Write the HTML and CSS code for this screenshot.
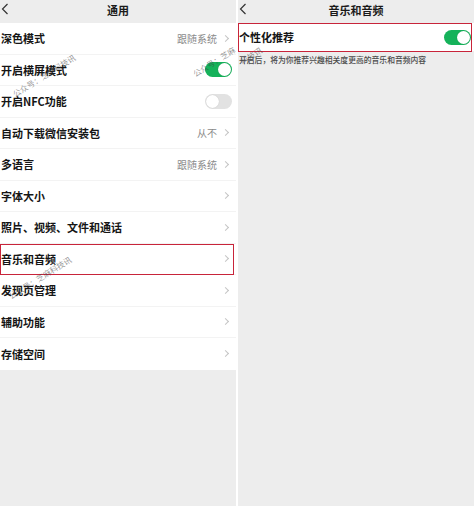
FILE: index.html
```html
<!DOCTYPE html>
<html lang="zh-CN">
  <head>
    <meta charset="UTF-8" />
    <title>通用 - 音乐和音频</title>
    <link rel="stylesheet" href="styles.css">
  </head>
  <body>
    <div class="screens">
      <div class="screen left">
        <div class="nav">
          <svg class="back" width="8" height="12" viewBox="0 0 8 12"><path d="M6.5 1 L1.5 6 L6.5 11" fill="none" stroke="#333" stroke-width="1.2"/></svg>
          <span class="nav-title">通用</span>
        </div>
        <ul class="list">
          <li class="row"><span class="label">深色模式</span><span class="value">跟随系统</span><span class="arrow"></span></li>
          <li class="row"><span class="label">开启横屏模式</span><span class="switch on"></span></li>
          <li class="row"><span class="label">开启NFC功能</span><span class="switch"></span></li>
          <li class="row"><span class="label">自动下载微信安装包</span><span class="value">从不</span><span class="arrow"></span></li>
          <li class="row"><span class="label">多语言</span><span class="value">跟随系统</span><span class="arrow"></span></li>
          <li class="row"><span class="label">字体大小</span><span class="arrow"></span></li>
          <li class="row"><span class="label">照片、视频、文件和通话</span><span class="arrow"></span></li>
          <li class="row marked"><span class="label">音乐和音频</span><span class="arrow"></span></li>
          <li class="row"><span class="label">发现页管理</span><span class="arrow"></span></li>
          <li class="row"><span class="label">辅助功能</span><span class="arrow"></span></li>
          <li class="row"><span class="label">存储空间</span><span class="arrow"></span></li>
        </ul>
        <span class="mark mark-1">公众号：芝麻科技讯</span>
        <span class="mark mark-2">公众号：芝麻</span>
        <span class="mark mark-3">公众号：芝麻科技讯</span>
      </div>
      <div class="screen right">
        <div class="nav">
          <svg class="back" width="8" height="12" viewBox="0 0 8 12"><path d="M6.5 1 L1.5 6 L6.5 11" fill="none" stroke="#333" stroke-width="1.2"/></svg>
          <span class="nav-title">音乐和音频</span>
        </div>
        <ul class="list">
          <li class="row marked"><span class="label">个性化推荐</span><span class="switch on"></span></li>
        </ul>
        <p class="tip">开启后，将为你推荐兴趣相关度更高的音乐和音频内容</p>
        <span class="mark mark-4">科技讯</span>
      </div>
    </div>
  </body>
</html>
```

FILE: styles.css
```css
* {
  box-sizing: border-box;
}
body {
  margin: 0;
  background: #fff;
  font-family: "Noto Sans CJK SC", "Noto Sans", sans-serif;
  color: #111;
}
ul {
  list-style: none;
  margin: 0;
  padding: 0;
}

.screens {
  display: grid;
  grid-template-columns: 236px 236px;
  gap: 2px;
  height: 506px;
}
.screen {
  position: relative;
  background: #ededed;
  overflow: hidden;
}

.nav {
  position: relative;
  height: 23px;
  display: flex;
  align-items: flex-start;
  justify-content: center;
  padding-top: 2px;
}
.nav .back {
  position: absolute;
  left: 1px;
  top: 3px;
}
.nav-title {
  font-size: 11px;
  line-height: 16px;
  font-weight: 700;
  color: #1a1a1a;
}

.list {
  background: #fff;
}
.row {
  position: relative;
  height: 31.5px;
  display: flex;
  align-items: center;
  padding: 0 6px 0 1px;
  border-bottom: 1px solid #f3f3f3;
}
.row:last-child {
  border-bottom: none;
}
.label {
  flex: 1;
  font-size: 11px;
  font-weight: 700;
  color: #151515;
}
.value {
  font-size: 10px;
  color: #8a8a8a;
  margin-right: 6px;
}
.arrow {
  width: 5px;
  height: 5px;
  border-top: 1px solid #c4c4c4;
  border-right: 1px solid #c4c4c4;
  transform: rotate(45deg);
  margin-right: 2px;
}

.switch {
  position: relative;
  width: 27px;
  height: 15px;
  border-radius: 8px;
  background: #e2e2e2;
  margin-right: -2px;
}
.switch::after {
  content: "";
  position: absolute;
  left: 1px;
  top: 1px;
  width: 13px;
  height: 13px;
  border-radius: 50%;
  background: #fff;
  box-shadow: 0 0 1px rgba(0, 0, 0, 0.2);
}
.switch.on {
  background: #15b25a;
}
.switch.on::after {
  left: 13px;
}

.marked::before {
  content: "";
  position: absolute;
  left: 0;
  right: 2px;
  top: 0;
  bottom: -1px;
  border: 1.5px solid #c8243a;
}
.right .row.marked {
  height: 28px;
  padding-right: 5px;
}

.tip {
  margin: 3px 0 0 1px;
  font-size: 7.8px;
  font-weight: 500;
  color: #4a4a4a;
}

.mark {
  position: absolute;
  font-size: 8px;
  color: rgba(60, 60, 60, 0.55);
  transform: rotate(-32deg);
  white-space: nowrap;
  pointer-events: none;
}
.mark-1 {
  left: 8px;
  top: 70px;
}
.mark-2 {
  left: 190px;
  top: 56px;
}
.mark-3 {
  left: 4px;
  top: 272px;
}
.mark-4 {
  left: 1px;
  top: 50px;
}
```
